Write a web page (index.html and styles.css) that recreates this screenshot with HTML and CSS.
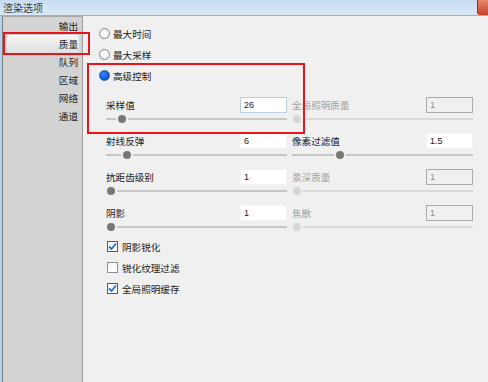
FILE: index.html
```html
<!DOCTYPE html>
<html lang="zh-CN">
<head>
    <meta charset="UTF-8">
    <title>渲染选项</title>
    <link rel="stylesheet" href="styles.css">
</head>
<body>
    <div class="titlebar">
        <span class="title">渲染选项</span>
        <span class="close"></span>
    </div>

    <div class="window">
        <ul class="nav">
            <li>输出</li>
            <li class="active">质量</li>
            <li>队列</li>
            <li>区域</li>
            <li>网络</li>
            <li>通道</li>
        </ul>

        <div class="panel">
            <div class="radios">
                <div class="radio"><span class="dot"></span>最大时间</div>
                <div class="radio"><span class="dot"></span>最大采样</div>
                <div class="radio"><span class="dot on"></span>高级控制</div>
            </div>

            <div class="grid">
                <div class="field">
                    <div class="field-top"><span>采样值</span><span class="input focus">26</span></div>
                    <div class="slider"><span class="thumb" style="left: 16px"></span></div>
                </div>
                <div class="field off">
                    <div class="field-top"><span>全局照明质量</span><span class="input">1</span></div>
                    <div class="slider"><span class="thumb" style="left: 5px"></span></div>
                </div>

                <div class="field">
                    <div class="field-top"><span>射线反弹</span><span class="input">6</span></div>
                    <div class="slider"><span class="thumb" style="left: 21px"></span></div>
                </div>
                <div class="field">
                    <div class="field-top"><span>像素过滤值</span><span class="input">1.5</span></div>
                    <div class="slider"><span class="thumb" style="left: 48px"></span></div>
                </div>

                <div class="field">
                    <div class="field-top"><span>抗距齿级别</span><span class="input">1</span></div>
                    <div class="slider"><span class="thumb" style="left: 5px"></span></div>
                </div>
                <div class="field off">
                    <div class="field-top"><span>景深质量</span><span class="input">1</span></div>
                    <div class="slider"><span class="thumb" style="left: 5px"></span></div>
                </div>

                <div class="field">
                    <div class="field-top"><span>阴影</span><span class="input">1</span></div>
                    <div class="slider"><span class="thumb" style="left: 5px"></span></div>
                </div>
                <div class="field off">
                    <div class="field-top"><span>焦散</span><span class="input">1</span></div>
                    <div class="slider"><span class="thumb" style="left: 5px"></span></div>
                </div>
            </div>

            <div class="checks">
                <div class="check">
                    <span class="box on"><svg viewBox="0 0 11 11" width="11" height="11"><path d="M2 5.5 L4.5 8 L9 2.5" fill="none" stroke="#1d6fe0" stroke-width="1.8"/></svg></span>阴影锐化
                </div>
                <div class="check"><span class="box"></span>锐化纹理过滤</div>
                <div class="check">
                    <span class="box on"><svg viewBox="0 0 11 11" width="11" height="11"><path d="M2 5.5 L4.5 8 L9 2.5" fill="none" stroke="#1d6fe0" stroke-width="1.8"/></svg></span>全局照明缓存
                </div>
            </div>
        </div>
    </div>

    <!-- red annotation frames -->
    <div class="mark mark-nav"></div>
    <div class="mark mark-adv"></div>
</body>
</html>
```

FILE: styles.css
```css
* {
    box-sizing: border-box;
}
body {
    margin: 0;
    width: 488px;
    height: 382px;
    overflow: hidden;
    position: relative;
    background-color: #f0f0f0;
    font-family: "Noto Sans CJK SC", "Microsoft YaHei", sans-serif;
    font-size: 9.6px;
    color: #1a1a1a;
}
.titlebar {
    height: 16px;
    display: flex;
    align-items: center;
    justify-content: space-between;
    background: linear-gradient(#c8dcf1, #dbe9f7);
    border-bottom: 1px solid #9fb0c2;
}
.title {
    padding-left: 3px;
    font-size: 10px;
    color: #3a3a3a;
}
.close {
    width: 11px;
    height: 15px;
    align-self: flex-start;
    background: linear-gradient(#e48a6e, #c5442a);
    border-left: 1px solid #8e3b2a;
    border-bottom-left-radius: 3px;
}
.window {
    display: flex;
    height: 366px;
    border-left: 2px solid #b4d2ee;
}
.nav {
    list-style: none;
    margin: 0;
    padding: 0;
    width: 81px;
    background-color: #d3d3d3;
    border-left: 1px solid #7e7e7e;
    border-right: 1px solid #9c9c9c;
    border-top: 1px solid #a8a8a8;
}
.nav li {
    height: 18px;
    line-height: 18px;
    text-align: right;
    padding-right: 4px;
}
.nav li.active {
    margin: 0 3px 0 4px;
    padding-right: 1px;
    background: linear-gradient(#f5f5f5, #e0e0e0);
    border-radius: 3px;
}
.panel {
    flex: 1;
    padding-left: 16px;
}
.radios {
    padding-top: 7px;
}
.radio {
    height: 21px;
    display: flex;
    align-items: center;
    gap: 3px;
}
.dot {
    width: 11px;
    height: 11px;
    border-radius: 50%;
    border: 1px solid #8a8a8a;
    background: radial-gradient(#ffffff, #e6e6e6);
}
.dot.on {
    border-color: #2b5ea6;
    background: radial-gradient(circle at 40% 35%, #3f8cff, #0a4fe0 70%);
}
.grid {
    display: grid;
    grid-template-columns: 181px 181px;
    column-gap: 5px;
    row-gap: 8px;
    margin: 11px 0 0 7px;
}
.field-top {
    height: 16px;
    display: flex;
    align-items: center;
    justify-content: space-between;
}
.input {
    width: 47px;
    height: 16px;
    line-height: 14px;
    padding-left: 3px;
    background-color: #ffffff;
    border: 1px solid #f4f4f4;
    font-family: "Liberation Sans", sans-serif;
    font-size: 9px;
}
.input.focus {
    border-color: #b7cde3;
}
.slider {
    position: relative;
    height: 12px;
}
.slider::before {
    content: "";
    position: absolute;
    left: 0;
    right: 0;
    top: 5px;
    height: 2px;
    background-color: #c6c6c6;
}
.thumb {
    position: absolute;
    top: 2px;
    width: 8px;
    height: 8px;
    margin-left: -4px;
    border-radius: 50%;
    background-color: #777777;
    box-shadow: 0 0 0 2px #f0f0f0;
}
.field.off {
    color: #a2a2a2;
}
.field.off .input {
    background-color: #f0f0f0;
    border-color: #ababab;
    color: #8c8c8c;
}
.field.off .slider::before {
    background-color: #dadada;
}
.field.off .thumb {
    background-color: #d6d6d6;
}
.checks {
    margin: 3px 0 0 8px;
}
.check {
    height: 21px;
    display: flex;
    align-items: center;
    gap: 4px;
}
.box {
    width: 11px;
    height: 11px;
    border: 1px solid #8f8f8f;
    background: linear-gradient(#f6f6f6, #ffffff);
    display: flex;
    align-items: center;
    justify-content: center;
}
.box.on {
    border-color: #5a5a5a;
}
.box svg {
    flex: none;
}
.mark {
    position: absolute;
    border: 2px solid #e8141b;
}
.mark-nav {
    left: 3px;
    top: 32px;
    width: 87px;
    height: 23px;
}
.mark-adv {
    left: 87px;
    top: 63px;
    width: 218px;
    height: 71px;
}
```
